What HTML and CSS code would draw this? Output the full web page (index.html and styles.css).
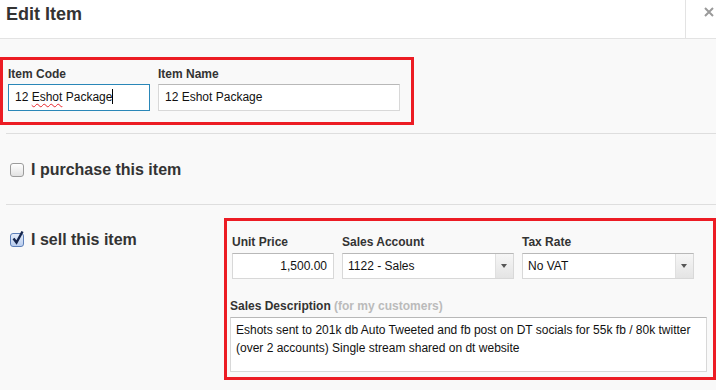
FILE: index.html
```html
<!DOCTYPE html>
<html lang="en">
<head>
  <meta charset="UTF-8" />
  <meta name="viewport" content="width=device-width, initial-scale=1" />
  <title>Edit Item</title>
  <link rel="stylesheet" href="styles.css">
</head>
<body>
  <div class="modal-head">
    <h1>Edit Item</h1>
    <div class="close-btn">
      <svg width="10" height="10" viewBox="0 0 10 10">
        <path d="M1 1 L9 9 M9 1 L1 9" stroke="#9a9a9a" stroke-width="2" />
      </svg>
    </div>
  </div>

  <div class="modal-body">
    <div class="code-box">
      <div class="field field-code">
        <div class="label">Item Code</div>
        <div class="text-input is-focused"><span class="typo">12 <u>Eshot</u> Package</span><span class="caret"></span></div>
      </div>
      <div class="field field-name">
        <div class="label">Item Name</div>
        <div class="text-input">12 Eshot Package</div>
      </div>
    </div>

    <div class="divider"></div>

    <div class="check-row purchase-row">
      <span class="checkbox"></span>
      <span>I purchase this item</span>
    </div>

    <div class="divider"></div>

    <div class="sell-section">
      <div class="check-row sell-row">
        <span class="checkbox is-checked">
          <svg width="14" height="16" viewBox="0 0 14 16">
            <path d="M2.5 8.5 L5.5 12.5 L11.5 1.5" fill="none" stroke="#17264d" stroke-width="2.4" />
          </svg>
        </span>
        <span>I sell this item</span>
      </div>

      <div class="sell-box">
        <div class="sell-fields">
          <div class="field field-price">
            <div class="label">Unit Price</div>
            <div class="text-input align-right">1,500.00</div>
          </div>
          <div class="field field-select">
            <div class="label">Sales Account</div>
            <div class="select-input">
              <span class="select-value">1122 - Sales</span>
              <span class="select-arrow"></span>
            </div>
          </div>
          <div class="field field-select">
            <div class="label">Tax Rate</div>
            <div class="select-input">
              <span class="select-value">No VAT</span>
              <span class="select-arrow"></span>
            </div>
          </div>
        </div>

        <div class="field field-desc">
          <div class="label">Sales Description <span class="hint">(for my customers)</span></div>
          <div class="text-area">Eshots sent to 201k db Auto Tweeted and fb post on DT socials for 55k fb / 80k twitter<br>(over 2 accounts) Single stream shared on dt website</div>
        </div>
      </div>
    </div>
  </div>
</body>
</html>
```

FILE: styles.css
```css
body {
  font-family: 'Liberation Sans', Arial, sans-serif;
  background-color: #f9f9f9;
  color: #333;
  margin: 0;
  padding: 0;
  overflow: hidden;
}

.modal-head {
  display: flex;
  height: 38px;
  background-color: #fff;
  border-bottom: 1px solid #e3e3e3;
}

.modal-head h1 {
  flex: 1;
  margin: 0;
  padding: 4px 0 0 6px;
  font-size: 18px;
  line-height: 20px;
  font-weight: bold;
  color: #333;
}

.close-btn {
  width: 31px;
  border-left: 1px solid #e3e3e3;
  padding: 7px 0 0 18px;
  box-sizing: border-box;
}

.close-btn svg {
  display: block;
}

.code-box {
  display: flex;
  gap: 8px;
  width: 414px;
  margin-top: 18px;
  padding: 7px 0 11px 5px;
  border: 3px solid #ec1c24;
  box-sizing: border-box;
}

.field {
  display: flex;
  flex-direction: column;
  gap: 3px;
}

.label {
  font-size: 12px;
  line-height: 14px;
  font-weight: bold;
  color: #333;
}

.label .hint {
  color: #bbb;
}

.field-code { width: 142px; }
.field-name { width: 242px; }

.text-input {
  height: 27px;
  padding: 0 6px;
  background-color: #fff;
  border: 1px solid #d8d8d8;
  border-top-color: #b8b8b8;
  box-sizing: border-box;
  font-size: 12px;
  line-height: 25px;
  color: #111;
  white-space: nowrap;
}

.text-input.is-focused {
  border-color: #2a87b8;
}

.text-input u {
  text-decoration: underline wavy #e8262b;
  text-decoration-thickness: 1px;
  text-underline-offset: 2px;
  text-decoration-skip-ink: none;
}

.caret {
  display: inline-block;
  width: 1px;
  height: 15px;
  background-color: #000;
  vertical-align: -3px;
}

.text-input.align-right {
  text-align: right;
}

.divider {
  margin-left: 6px;
  border-top: 1px solid #dedede;
}

.code-box + .divider {
  margin-top: 8px;
}

.check-row {
  display: flex;
  align-items: center;
  gap: 7px;
  font-size: 16px;
  line-height: 18px;
  font-weight: bold;
  color: #333;
}

.purchase-row {
  padding: 27px 0 25px 10px;
}

.checkbox {
  position: relative;
  width: 14px;
  height: 14px;
  border: 1px solid #9c9c9c;
  border-radius: 3px;
  background: linear-gradient(#ffffff, #e2e2e2);
  box-sizing: border-box;
}

.checkbox.is-checked {
  border-color: #5d7fb8;
  background: linear-gradient(#e4ecf9, #b9cdee);
}

.checkbox svg {
  position: absolute;
  left: 0;
  top: -4px;
}

.sell-section {
  display: flex;
}

.sell-row {
  width: 214px;
  padding: 26px 0 0 10px;
  align-self: flex-start;
}

.sell-box {
  flex: 1;
  margin-top: 13px;
  padding: 14px 0 5px 5px;
  border: 3px solid #ec1c24;
}

.sell-fields {
  display: flex;
  gap: 8px;
}

.sell-box .field {
  gap: 4px;
}

.sell-box .text-input,
.select-input {
  height: 26px;
  line-height: 24px;
}

.field-price { width: 102px; }
.field-select { width: 172px; }

.select-input {
  display: flex;
  background-color: #fff;
  border: 1px solid #d8d8d8;
  border-top-color: #b8b8b8;
  box-sizing: border-box;
  font-size: 12px;
  color: #111;
}

.select-value {
  flex: 1;
  padding-left: 5px;
}

.select-arrow {
  position: relative;
  width: 17px;
  border-left: 1px solid #e0e0e0;
  background: linear-gradient(#f6f6f6, #e4e4e4);
}

.select-arrow::after {
  content: '';
  position: absolute;
  left: 5px;
  top: 10px;
  border-left: 3px solid transparent;
  border-right: 3px solid transparent;
  border-top: 4px solid #555;
}

.field-desc {
  margin: 20px 6px 0 -2px;
}

.text-area {
  height: 55px;
  padding: 3px 5px;
  background-color: #fff;
  border: 1px solid #d8d8d8;
  border-top-color: #b8b8b8;
  box-sizing: border-box;
  font-size: 12px;
  line-height: 18px;
  color: #111;
}
```
